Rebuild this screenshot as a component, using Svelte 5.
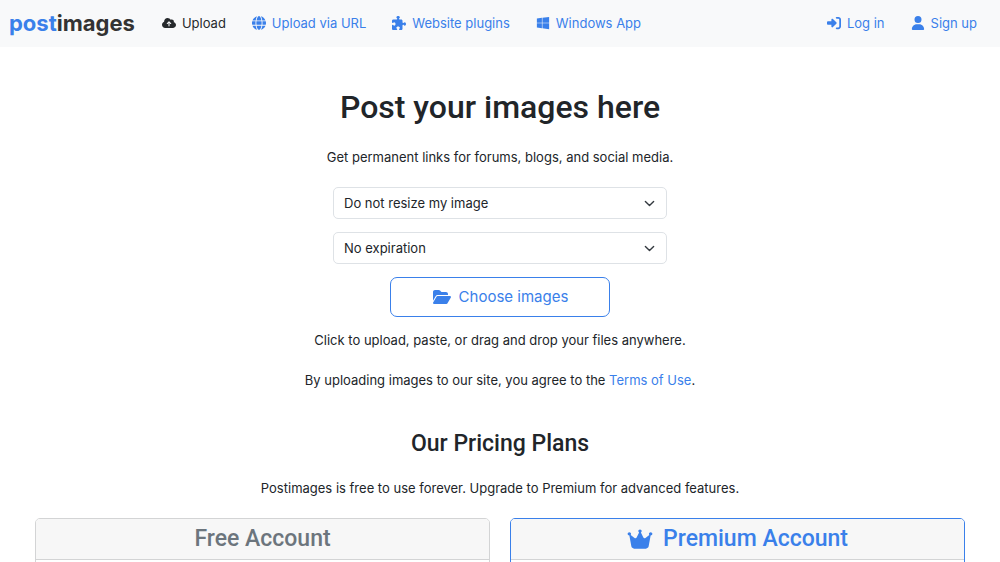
<script>
  const icons = {
    upload: { w: 640, d: 'M144 480C64.5 480 0 415.5 0 336c0-62.8 40.2-116.2 96.2-135.9c-.1-2.7-.2-5.4-.2-8.1c0-88.4 71.6-160 160-160c59.3 0 111 32.2 138.7 80.2C409.9 102 428.3 96 448 96c53 0 96 43 96 96c0 12.2-2.3 23.8-6.4 34.6C596 238.4 640 290.1 640 352c0 70.7-57.3 128-128 128H144zm79-217c-9.4 9.4-9.4 24.6 0 33.9s24.6 9.4 33.9 0l39-39V392c0 13.3 10.7 24 24 24s24-10.7 24-24V257.9l39 39c9.4 9.4 24.6 9.4 33.9 0s9.4-24.6 0-33.9l-80-80c-9.4-9.4-24.6-9.4-33.9 0l-80 80z' },
    globe: { w: 512, d: 'M352 256c0 22.2-1.2 43.6-3.3 64H163.3c-2.2-20.4-3.3-41.8-3.3-64s1.2-43.6 3.3-64H348.7c2.2 20.4 3.3 41.8 3.3 64zm28.8-64H503.9c5.3 20.5 8.1 41.9 8.1 64s-2.8 43.5-8.1 64H380.8c2.1-20.6 3.2-42 3.2-64s-1.1-43.4-3.2-64zm112.6-32H376.7c-10-63.9-29.8-117.4-55.3-151.6c78.3 20.7 142 77.5 171.9 151.6zm-149.1 0H167.7c6.1-36.4 15.5-68.6 27-94.7c10.5-23.6 22.2-40.7 33.5-51.5C239.4 3.2 248.7 0 256 0s16.6 3.2 27.8 13.8c11.3 10.8 23 27.9 33.5 51.5c11.6 26 20.9 58.2 27 94.7zm-209 0H18.6C48.6 85.9 112.2 29.1 190.6 8.4C165.1 42.6 145.3 96.1 135.3 160zM8.1 192H131.2c-2.1 20.6-3.2 42-3.2 64s1.1 43.4 3.2 64H8.1C2.8 299.5 0 278.1 0 256s2.8-43.5 8.1-64zM194.7 446.6c-11.6-26-20.9-58.2-27-94.6H344.3c-6.1 36.4-15.5 68.6-27 94.6c-10.5 23.6-22.2 40.7-33.5 51.5C272.6 508.8 263.3 512 256 512s-16.6-3.2-27.8-13.8c-11.3-10.8-23-27.9-33.5-51.5zM135.3 352c10 63.9 29.8 117.4 55.3 151.6C112.2 482.9 48.6 426.1 18.6 352H135.3zm358.1 0c-30 74.1-93.6 130.9-171.9 151.6c25.5-34.2 45.2-87.7 55.3-151.6H493.4z' },
    puzzle: { w: 512, d: 'M192 104.8c0-9.2-5.8-17.3-13.2-22.8C167.2 73.3 160 61.3 160 48c0-26.5 28.7-48 64-48s64 21.5 64 48c0 13.3-7.2 25.3-18.8 34c-7.4 5.5-13.2 13.6-13.2 22.8c0 12.8 10.4 23.2 23.2 23.2H336c26.5 0 48 21.5 48 48v56.8c0 12.8 10.4 23.2 23.2 23.2c9.2 0 17.3-5.8 22.8-13.2c8.7-11.6 20.7-18.8 34-18.8c26.5 0 48 28.7 48 64s-21.5 64-48 64c-13.3 0-25.3-7.2-34-18.8c-5.5-7.4-13.6-13.2-22.8-13.2c-12.8 0-23.2 10.4-23.2 23.2V464c0 26.5-21.5 48-48 48H279.2c-12.8 0-23.2-10.4-23.2-23.2c0-9.2 5.8-17.3 13.2-22.8c11.6-8.7 18.8-20.7 18.8-34c0-26.5-28.7-48-64-48s-64 21.5-64 48c0 13.3 7.2 25.3 18.8 34c7.4 5.5 13.2 13.6 13.2 22.8c0 12.8-10.4 23.2-23.2 23.2H48c-26.5 0-48-21.5-48-48V343.2C0 330.4 10.4 320 23.2 320c9.2 0 17.3 5.8 22.8 13.2C54.7 344.8 66.7 352 80 352c26.5 0 48-28.7 48-64s-21.5-64-48-64c-13.3 0-25.3 7.2-34 18.8C40.5 250.2 32.4 256 23.2 256C10.4 256 0 245.6 0 232.8V176c0-26.5 21.5-48 48-48H168.8c12.8 0 23.2-10.4 23.2-23.2z' },
    windows: { w: 448, d: 'M0 93.7l183.6-25.3v177.4H0V93.7zm0 324.6l183.6 25.3V268.4H0v149.9zm203.8 28L448 480V268.4H203.8v177.9zm0-380.6v180.1H448V32L203.8 65.7z' },
    login: { w: 512, d: 'M217.9 105.9L340.7 228.7c7.2 7.2 11.3 17.1 11.3 27.3s-4.1 20.1-11.3 27.3L217.9 406.1c-6.4 6.4-15 9.9-24 9.9c-18.7 0-33.9-15.2-33.9-33.9l0-62.1L32 320c-17.7 0-32-14.3-32-32l0-64c0-17.7 14.3-32 32-32l128 0 0-62.1c0-18.7 15.2-33.9 33.9-33.9c9 0 17.6 3.6 24 9.9zM352 416l64 0c17.7 0 32-14.3 32-32l0-256c0-17.7-14.3-32-32-32l-64 0c-17.7 0-32-14.3-32-32s14.3-32 32-32l64 0c53 0 96 43 96 96l0 256c0 53-43 96-96 96l-64 0c-17.7 0-32-14.3-32-32s14.3-32 32-32z' },
    user: { w: 448, d: 'M224 256A128 128 0 1 0 224 0a128 128 0 1 0 0 256zm-45.7 48C79.8 304 0 383.8 0 482.3C0 498.7 13.3 512 29.7 512H418.3c16.4 0 29.7-13.3 29.7-29.7C448 383.8 368.2 304 269.7 304H178.3z' },
    folder: { w: 576, d: 'M88.7 223.8L0 375.8V96C0 60.7 28.7 32 64 32H181.5c17 0 33.3 6.7 45.3 18.7l26.5 26.5c12 12 28.3 18.7 45.3 18.7H416c35.3 0 64 28.7 64 64v32H144c-22.8 0-43.8 12.1-55.3 31.8zm27.6 16.1C122.1 230 132.6 224 144 224H544c11.5 0 22 6.1 27.7 16.1s5.7 22.2-.1 32.1l-112 192C453.9 474 443.4 480 432 480H32c-11.5 0-22-6.1-27.7-16.1s-5.7-22.2 .1-32.1l112-192z' },
    crown: { w: 576, d: 'M309 106c11.4-7 19-19.7 19-34c0-22.1-17.9-40-40-40s-40 17.9-40 40c0 14.4 7.6 27 19 34L209.7 220.6c-9.1 18.2-32.7 23.4-48.6 10.7L72 160c5-6.7 8-15 8-24c0-22.1-17.9-40-40-40S0 113.9 0 136s17.9 40 40 40c.2 0 .5 0 .7 0L86.4 427.4c5.5 30.4 32 52.6 63 52.6H426.6c30.9 0 57.4-22.1 63-52.6L535.3 176c.2 0 .5 0 .7 0c22.1 0 40-17.9 40-40s-17.9-40-40-40s-40 17.9-40 40c0 9 3 17.3 8 24l-89.1 71.3c-15.9 12.7-39.5 7.5-48.6-10.7L309 106z' }
  };

  const mainLinks = [
    { icon: 'upload', label: 'Upload', active: true },
    { icon: 'globe', label: 'Upload via URL' },
    { icon: 'puzzle', label: 'Website plugins' },
    { icon: 'windows', label: 'Windows App' }
  ];
  const userLinks = [
    { icon: 'login', label: 'Log in' },
    { icon: 'user', label: 'Sign up' }
  ];
</script>

{#snippet icon(name)}
  <svg class="icon" viewBox="0 0 {icons[name].w} 512" aria-hidden="true"><path d={icons[name].d} /></svg>
{/snippet}

{#snippet links(items)}
  <ul class="links">
    {#each items as item}
      <li><a class:active={item.active} href="#top">{@render icon(item.icon)}{item.label}</a></li>
    {/each}
  </ul>
{/snippet}

<header>
  <a class="brand" href="#top"><span>post</span>images</a>
  <nav>
    {@render links(mainLinks)}
    {@render links(userLinks)}
  </nav>
</header>

<main>
  <section class="uploader">
    <h1>Post your images here</h1>
    <p>Get permanent links for forums, blogs, and social media.</p>
    <form>
      <select aria-label="Image size"><option>Do not resize my image</option></select>
      <select aria-label="Expiration"><option>No expiration</option></select>
      <button type="button">{@render icon('folder')}Choose images</button>
    </form>
    <p class="hint">Click to upload, paste, or drag and drop your files anywhere.</p>
    <p>By uploading images to our site, you agree to the <a href="#top">Terms of Use</a>.</p>
  </section>

  <section class="pricing">
    <h2>Our Pricing Plans</h2>
    <p>Postimages is free to use forever. Upgrade to Premium for advanced features.</p>
    <div class="plans">
      <article class="card"><h3>Free Account</h3></article>
      <article class="card premium"><h3>{@render icon('crown')}Premium Account</h3></article>
    </div>
  </section>
</main>

<style>
  :global(body) {
    margin: 0;
    height: 100vh;
    overflow: hidden;
    background: #fff;
    color: #212529;
    font: 400 13px/20px Inter, 'Liberation Sans', sans-serif;
  }
  a { color: #3a80ea; text-decoration: none; }
  h1, h2, h3, p, ul { margin: 0; padding: 0; }
  h1, h2, h3 { font-family: Roboto, 'Liberation Sans', sans-serif; font-weight: 500; }
  .icon { width: 14px; height: 14px; margin: 0 2px; flex: none; fill: currentColor; }

  header {
    display: flex;
    align-items: center;
    box-sizing: border-box;
    height: 47px;
    padding: 0 23px 1px 9px;
    gap: 25px;
    background: #f8f9fa;
  }
  .brand { color: #333; font-weight: 700; font-size: 22px; line-height: 28px; }
  .brand span { color: #3a80ea; }
  nav { display: flex; flex: 1; align-items: center; justify-content: space-between; }
  .links { display: flex; gap: 24px; list-style: none; }
  .links a { display: flex; align-items: center; gap: 4px; white-space: nowrap; }
  .links .active { color: #26292c; }

  main { text-align: center; }
  .uploader { padding-top: 40px; }
  h1 { margin-bottom: 20px; font-size: 32px; line-height: 40px; }
  form {
    display: flex;
    flex-direction: column;
    align-items: center;
    gap: 13px;
    margin: 20px 0 13px;
  }
  select {
    appearance: none;
    width: 334px;
    height: 32px;
    padding: 0 32px 0 10px;
    border: 1px solid #dee2e6;
    border-radius: 5px;
    background: #fff url("data:image/svg+xml,%3Csvg xmlns='http://www.w3.org/2000/svg' viewBox='0 0 16 16'%3E%3Cpath fill='none' stroke='%23343a40' stroke-linecap='round' stroke-linejoin='round' stroke-width='2' d='m2 5 6 6 6-6'/%3E%3C/svg%3E") no-repeat right 11px center / 11px 11px;
    color: inherit;
    font: inherit;
  }
  button {
    display: flex;
    align-items: center;
    justify-content: center;
    gap: 7px;
    width: 220px;
    height: 40px;
    border: 1px solid #3a80ea;
    border-radius: 7px;
    background: #fff;
    color: #3a80ea;
    font: inherit;
    font-size: 15px;
  }
  button .icon { width: 20px; height: 16px; margin: 0; }
  .hint { margin-bottom: 20px; }

  .pricing { padding: 40px 35px 0; }
  h2 { margin-bottom: 20px; font-size: 23px; line-height: 28px; }
  .plans { display: grid; grid-template-columns: 1fr 1fr; gap: 20px; margin-top: 20px; }
  .card { height: 320px; border: 1px solid #d3d4d5; border-radius: 5px; }
  .card h3 {
    display: flex;
    align-items: center;
    justify-content: center;
    gap: 10px;
    height: 40px;
    border-bottom: 1px solid #d3d4d5;
    border-radius: 4px 4px 0 0;
    background: #f7f7f7;
    color: #6c757d;
    font-size: 23px;
  }
  .card h3 .icon { width: 26px; height: 22px; margin: 0; }
  .premium { border-color: #3a80ea; }
  .premium h3 { color: #3a80ea; }
</style>
